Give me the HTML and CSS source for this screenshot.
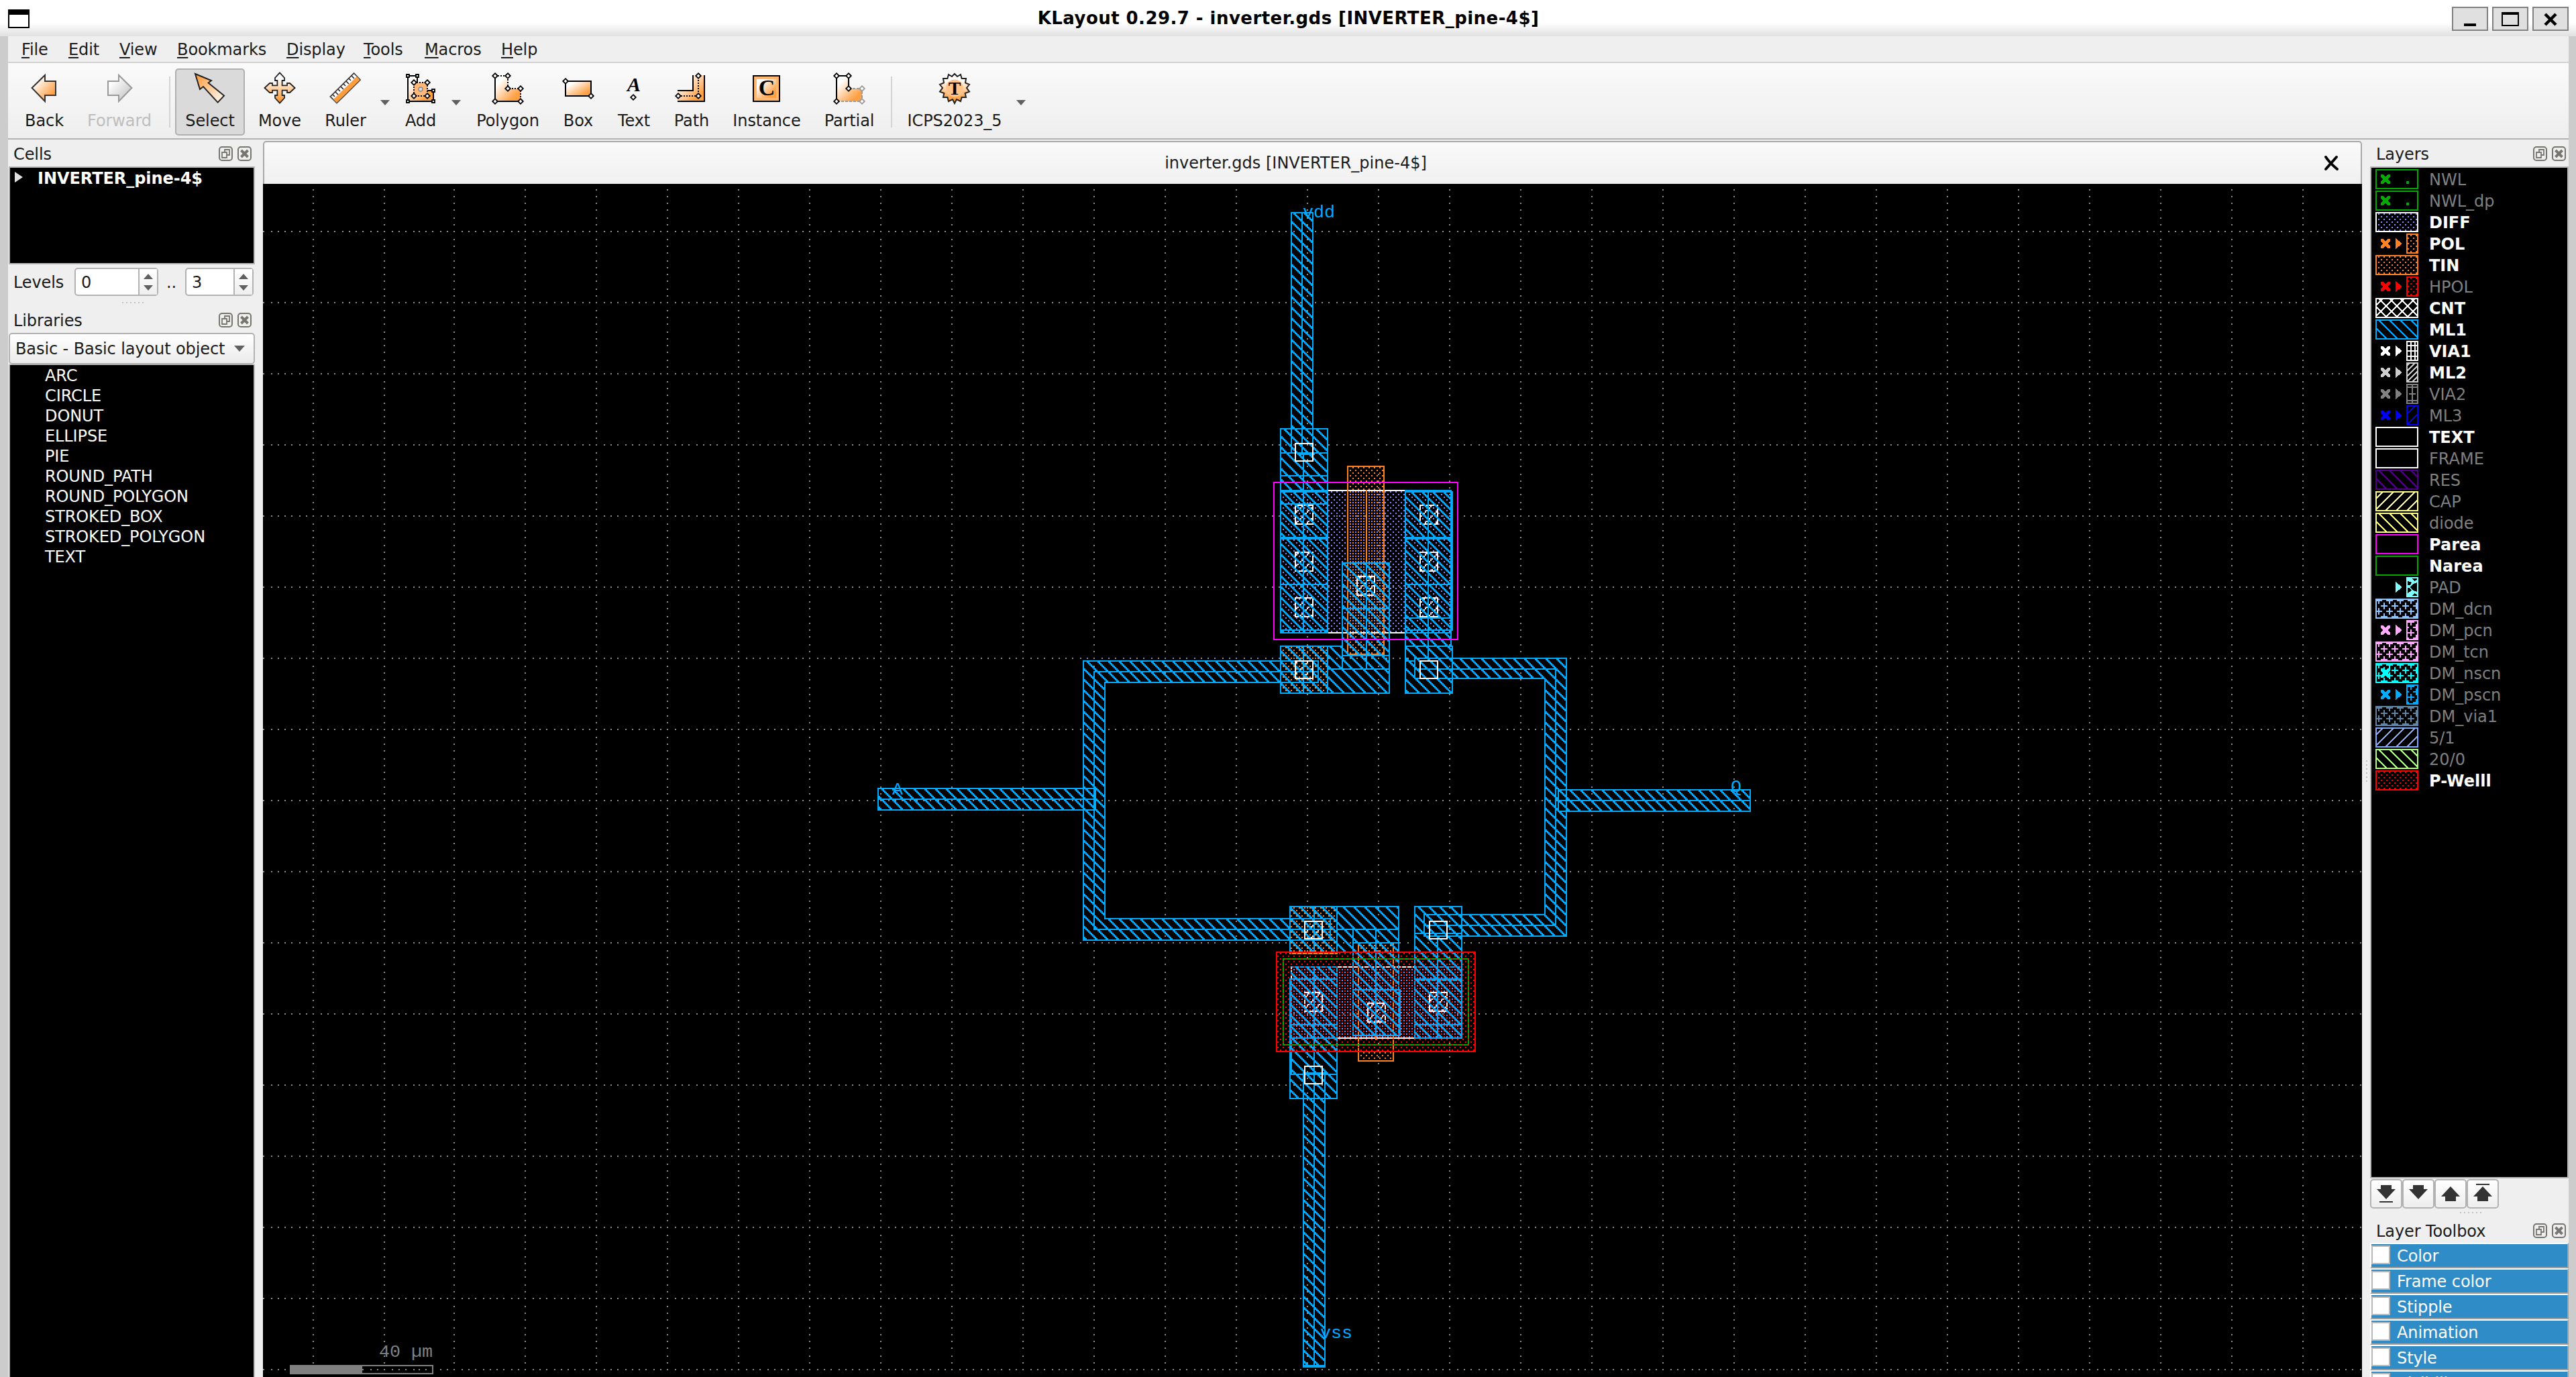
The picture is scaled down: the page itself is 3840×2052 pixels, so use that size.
FILE: index.html
```html
<!DOCTYPE html>
<html lang="en">
<head>
<meta charset="utf-8">
<title>KLayout 0.29.7 - inverter.gds [INVERTER_pine-4$]</title>
<link rel="stylesheet" href="styles.css">
</head>
<body>
<svg class="defs" width="0" height="0" aria-hidden="true">
  <defs>
    <linearGradient id="diag" x1="0" y1="0" x2="1" y2="1"><stop offset=".2" stop-color="#fff"/><stop offset=".8" stop-color="#ffa044"/></linearGradient>
    <linearGradient id="diagGray" x1="0" y1="0" x2="1" y2="1"><stop offset=".2" stop-color="#fff"/><stop offset="1" stop-color="#bbb"/></linearGradient>
    <linearGradient id="diagRev" x1="0" y1="0" x2="1" y2="1"><stop offset="0" stop-color="#ff9833"/><stop offset="1" stop-color="#fff"/></linearGradient>
    <linearGradient id="down" x1="0" y1="0" x2="0" y2="1"><stop offset=".2" stop-color="#fff"/><stop offset="1" stop-color="#ff8c1a"/></linearGradient>
    <path id="node" d="M0-1.9 1.9 0 0 1.9-1.9 0Z"/>
    <!-- layer swatch parts, 32 x 15 grid -->
    <rect id="frame" x=".5" y=".5" width="31" height="14" fill="none" stroke="currentColor"/>
    <path id="lx" d="M4 4.200h2l1.500 1.600L9 4.200h2v1.400L9.300 7.500 11 9.400v1.400H9L7.500 9.200 6 10.800H4V9.400l1.700-1.900L4 5.600Z" fill="currentColor"/>
    <path id="lt" d="M15 3.500 20 7.500 15 11.500Z" fill="currentColor"/>
    <rect id="mini" x="23.5" y=".5" width="8" height="14" fill="none" stroke="currentColor"/>
    <clipPath id="mc"><rect x="23" y="0" width="9" height="15"/></clipPath>
    <path id="dots" d="M2 1.500H31M4 3.500H31M2 5.500H31M4 7.500H31M2 9.500H31M4 11.500H31M2 13.500H31" fill="none" stroke="currentColor" stroke-dasharray="1 3"/>
    <path id="back" d="M-14 0 1 15M-6 0 9 15M2 0 17 15M10 0 25 15M18 0 33 15M26 0 41 15" fill="none" stroke="currentColor" stroke-width=".75"/>
    <path id="backThick" d="M-14 0 1 15M-6 0 9 15M2 0 17 15M10 0 25 15M18 0 33 15M26 0 41 15" fill="none" stroke="currentColor" stroke-width="1.3"/>
    <path id="slash" d="M-1 15 14 0M-9 15 6 0M7 15 22 0M15 15 30 0M23 15 38 0M31 15 46 0" fill="none" stroke="currentColor" stroke-width=".75"/>
    <path id="dense" d="M11 15 26 0M15 15 30 0M19 15 34 0M23 15 38 0M27 15 42 0M31 15 46 0" fill="none" stroke="currentColor" stroke-width=".75"/>
    <path id="plus" d="M6.500 3v5M14.500 3v5M22.500 3v5M30.500 3v5M4 5.500h5M12 5.500h5M20 5.500h5M28 5.500h4M2.500 7v5M10.500 7v5M18.500 7v5M26.500 7v5M0 9.500h5M8 9.500h5M16 9.500h5M24 9.500h5M2.500 0v4M10.500 0v4M18.500 0v4M26.500 0v4M6.500 11v4M14.500 11v4M22.500 11v4M30.500 11v4M4 13.500h5M12 13.500h5M20 13.500h5M28 13.500h4M0 1.500h5M8 1.500h5M16 1.500h5M24 1.500h5" fill="none" stroke="currentColor"/>
    <path id="grid" d="M26.500 0v15M29.500 0v15M23 3.500h9M23 7.500h9M23 11.500h9" fill="none" stroke="currentColor"/>
    <path id="bars" d="M23 2.500h9M27.500 0v15M23 12.500h9M25 7.500h5" fill="none" stroke="currentColor"/>
    <!-- stipples of the layout view -->
    <pattern id="ml1" width="8" height="8" patternUnits="userSpaceOnUse"><path d="M5 0h2v1h-2zM6 1h2v1h-2zM7 2h1v1h-1zM0 2h1v1h-1zM0 3h2v1h-2zM1 4h2v1h-2zM2 5h2v1h-2zM3 6h2v1h-2zM4 7h2v1h-2z" fill="#0af"/></pattern>
    <pattern id="pol" width="4" height="4" patternUnits="userSpaceOnUse"><path d="M0 0h1v1h-1zM2 2h1v1h-1z" fill="#ff8020"/></pattern>
    <pattern id="pwell" width="4" height="4" patternUnits="userSpaceOnUse"><path d="M0 0h1v1h-1zM2 2h1v1h-1z" fill="#f00"/></pattern>
    <pattern id="diff" width="4" height="4" patternUnits="userSpaceOnUse"><path d="M2 0h1v1h-1zM0 2h1v1h-1z" fill="#9580ff"/></pattern>
    <pattern id="cnt" width="8" height="8" patternUnits="userSpaceOnUse"><path d="M3 0h1v1h-1zM2 1h1v1h-1zM1 2h1v1h-1zM0 3h1v1h-1zM7 4h1v1h-1zM6 5h1v1h-1zM5 6h1v1h-1zM4 7h1v1h-1z" fill="#fff"/></pattern>
    <path id="cell" fill="#8c8c8c" d="M0 0h1v1h-1zM6 0h1v1h-1zM11 0h1v1h-1zM16 0h1v1h-1zM22 0h1v1h-1zM27 0h1v1h-1zM32 0h1v1h-1zM37 0h1v1h-1zM43 0h1v1h-1zM48 0h1v1h-1zM0 6h1v1h-1zM0 11h1v1h-1zM0 16h1v1h-1zM0 22h1v1h-1zM0 27h1v1h-1zM0 32h1v1h-1zM0 37h1v1h-1zM0 43h1v1h-1zM0 48h1v1h-1z"/>
    <pattern id="dotgrid" x="20" y="172" width="53" height="53" patternUnits="userSpaceOnUse"><use href="#cell"/></pattern>
    <pattern id="dotgridLeft" x="21" y="172" width="53" height="53" patternUnits="userSpaceOnUse"><use href="#cell"/></pattern>
    <g id="dockbtns" fill="none" stroke="#77756f" stroke-width="2">
      <rect x="2" y="1" width="19" height="20" rx="4"/><rect x="30" y="1" width="19" height="20" rx="4"/>
      <path d="M10 9V5h7v8h-4M6 9h7v8H6Z" stroke-width="1.800"/><path d="M34.500 6 44.500 16M44.500 6 34.500 16" stroke-width="4"/>
    </g>
  </defs>
</svg>

<header class="titlebar">
  <svg class="appicon" viewBox="0 0 32 28"><rect x="1" y="1" width="30" height="26" fill="#fff" stroke="#000" stroke-width="2"/><path d="M0 0h32v8H0Z"/></svg>
  <h1>KLayout 0.29.7 - inverter.gds [INVERTER_pine-4$]</h1>
  <div class="winbtns">
    <span><svg viewBox="0 0 54 36"><path d="M18 27h18" stroke="#000" stroke-width="4"/></svg></span>
    <span><svg viewBox="0 0 54 36"><path d="M15 9h24v19H15Z" fill="none" stroke="#000" stroke-width="2"/><path d="M14 10h26" stroke="#000" stroke-width="4"/></svg></span>
    <span><svg viewBox="0 0 54 36"><path d="M19 11 35 27M35 11 19 27" stroke="#000" stroke-width="4.500"/></svg></span>
  </div>
</header>

<div class="window">
<nav class="menubar"><span><u>F</u>ile</span><span><u>E</u>dit</span><span><u>V</u>iew</span><span><u>B</u>ookmarks</span><span><u>D</u>isplay</span><span><u>T</u>ools</span><span><u>M</u>acros</span><span><u>H</u>elp</span></nav>

<div class="toolbar">
  <div class="tool w108"><svg viewBox="0 0 24 24"><path d="M2.800 12 12.500 2.500V7H20.500V17.500H12.500V22Z" fill="url(#diag)" stroke="#333"/></svg>Back</div>
  <div class="tool w116 disabled"><svg viewBox="0 0 24 24"><path d="M21.200 12 11.500 2.500V7H3.500V17.500H11.500V22Z" fill="url(#diagGray)" stroke="#999"/></svg>Forward</div>
  <i class="sep first"></i>
  <div class="tool w104 active"><svg viewBox="0 0 24 24"><path d="M1 1.500 13 6.500 10.800 8.200 22.500 17.800 17.800 22.800 7 11 4.500 13Z" fill="url(#diagRev)" stroke="#222"/></svg>Select</div>
  <div class="tool w104"><svg viewBox="0 0 24 24"><path d="M12 .7 15.500 4.500V6.500H13.800V10.200H17.500V8.500H19.500L23.300 12 19.500 15.500H17.500V13.800H13.800V17.500H15.500V19.500L12 23.300 8.500 19.500V17.500H10.200V13.800H6.500V15.500H4.500L.7 12 4.500 8.500H6.500V10.200H10.200V6.500H8.500V4.500Z" fill="url(#down)" stroke="#222" stroke-width=".9"/></svg>Move</div>
  <div class="tool w92"><svg viewBox="0 0 24 24"><path d="M18.300 1 23 6 5.500 23.300.7 18.500Z" fill="#fff" stroke="#444" stroke-width=".9"/><path d="M20.500 3.500 22.700 6 5.400 23 3 20.500Z" fill="#ff9d3d"/><path d="M16.500 3l2 2M14.500 5l1.500 1.500M12.500 7l2 2M10.500 9l1.500 1.500M8.500 11l2 2M6.500 13l1.500 1.500M4.500 15l2 2M2.500 17l1.500 1.500" stroke="#222" stroke-width=".8"/></svg>Ruler</div>
  <i class="drop"></i>
  <div class="tool w80"><svg viewBox="0 0 24 24"><path d="M2.500 3H9.500V14H21.500V22H2.500Z" fill="url(#diag)" stroke="#000"/><rect x="7" y="8" width="10" height="10" fill="#ffb878"/><path d="M7 8h10v10H7Z" fill="none" stroke="#000" stroke-dasharray="1 1"/><circle cx="12" cy="13" r="1.500" fill="#ddd" stroke="#888" stroke-width=".7"/><g fill="#fff" stroke="#000" stroke-width=".9"><path d="M1.500 2h2v2h-2zM8.500 2h2v2h-2zM1.500 21h2v2h-2zM20.500 21h2v2h-2zM20.500 13h2v2h-2z"/><use href="#node" x="7" y="8"/><use href="#node" x="17" y="8"/><use href="#node" x="7" y="18"/><use href="#node" x="17" y="18"/></g></svg>Add</div>
  <i class="drop"></i>
  <div class="tool w128"><svg viewBox="0 0 24 24"><path d="M2.500 3H12V12.500H21.500V22H2.500Z" fill="url(#diag)"/><path d="M2.500 3H12V12.500H21.500V22" fill="none" stroke="#000" stroke-dasharray="1 1"/><path d="M2.500 3V22H21.500" fill="none" stroke="#000"/><g fill="#fff" stroke="#000" stroke-width=".9"><use href="#node" x="2.500" y="3"/><use href="#node" x="12" y="3"/><use href="#node" x="12" y="12.500"/><use href="#node" x="21.500" y="12.500"/><use href="#node" x="2.500" y="22"/><use href="#node" x="21.500" y="22"/></g></svg>Polygon</div>
  <div class="tool w82"><svg viewBox="0 0 24 24"><path d="M2.500 7H21.500V18H2.500Z" fill="url(#diag)" stroke="#000"/><g fill="#fff" stroke="#000" stroke-width=".9"><use href="#node" x="2.500" y="7"/><use href="#node" x="21.500" y="18"/></g></svg>Box</div>
  <div class="tool w84"><svg viewBox="0 0 24 24"><text x="12" y="14.500" class="ic-a">A</text><use href="#node" x="11.500" y="19" fill="#fff" stroke="#000" stroke-width=".9"/></svg>Text</div>
  <div class="tool w88"><svg viewBox="0 0 24 24"><path d="M13 2.500H21.500V22H1.500V14H13Z" fill="url(#diag)"/><path d="M13 2.500V14H1.500M1.500 22H21.500V2.500" fill="none" stroke="#000"/><path d="M2 18H17V3" fill="none" stroke="#000" stroke-dasharray="1 1"/><g fill="#fff" stroke="#000" stroke-width=".9"><use href="#node" x="2" y="18"/><use href="#node" x="17" y="18"/><use href="#node" x="17" y="3"/></g></svg>Path</div>
  <div class="tool w136"><svg viewBox="0 0 24 24"><path d="M2 3H21.500V22H2Z" fill="#ffb66e" stroke="#000"/><path d="M4.500 5.500H19V19.500H4.500Z" fill="url(#diag)"/><text x="12" y="17.700" class="ic-c">C</text></svg>Instance</div>
  <div class="tool w110"><svg viewBox="0 0 24 24"><path d="M2.500 3H11.500V12.500H21.500V22H2.500Z" fill="url(#diag)"/><path d="M11.500 12.500H21.500V22H2.500" fill="none" stroke="#999" stroke-dasharray="2 1"/><path d="M2.500 22V3H11.500V12.500" fill="none" stroke="#000"/><g fill="#fff" stroke="#000" stroke-width=".9"><use href="#node" x="2.500" y="3"/><use href="#node" x="11.500" y="3"/><use href="#node" x="11.500" y="12.500"/><use href="#node" x="2.500" y="22"/><g stroke="#999"><use href="#node" x="21.500" y="12.500"/><use href="#node" x="21.500" y="22"/></g></g></svg>Partial</div>
  <i class="sep"></i>
  <div class="tool w172"><svg viewBox="0 0 24 24"><path d="M12 23.500 10.500 20.500 7.500 22 6.700 19 3.500 19 4.200 16 1 14.800 3 12 1 9.500 4 8.200 3.500 5 6.700 5 7.500 2 10 3.500 12 1.500 14 3.500 16.500 2 17.300 5 20.500 5 20 8.200 23 9.500 21 12 23 14.800 19.800 16 20.500 19 17.300 19 16.500 22 13.500 20.500Z" fill="url(#down)" stroke="#222"/><circle cx="12" cy="12.200" r="6.500" fill="#ffc48a"/><text x="12" y="16.800" class="ic-t">T</text></svg>ICPS2023_5</div>
  <i class="drop"></i>
</div>

<main class="body">
  <aside class="dock left">
    <div class="docktitle">Cells<svg viewBox="0 0 50 22"><use href="#dockbtns"/></svg></div>
    <div class="cells"><i class="tri"></i><b>INVERTER_pine-4$</b></div>
    <div class="levels"><span class="lbl">Levels</span><span class="spin s1"><span>0</span><i></i></span><span class="dd">..</span><span class="spin s2"><span>3</span><i></i></span></div>
    <div class="grip"></div>
    <div class="docktitle lib">Libraries<svg viewBox="0 0 50 22"><use href="#dockbtns"/></svg></div>
    <div class="combo">Basic - Basic layout object<i></i></div>
    <ul class="liblist"><li>ARC</li><li>CIRCLE</li><li>DONUT</li><li>ELLIPSE</li><li>PIE</li><li>ROUND_PATH</li><li>ROUND_POLYGON</li><li>STROKED_BOX</li><li>STROKED_POLYGON</li><li>TEXT</li></ul>
  </aside>

  <section class="view">
    <div class="tab"><span>inverter.gds [INVERTER_pine-4$]</span><svg viewBox="0 0 24 24"><path d="M4 3C8 9 15 16 21 21M20 3 4 21" fill="none" stroke="#000" stroke-width="4" stroke-linecap="round"/></svg></div>
    <svg class="layout" viewBox="196 137 1564.5 889" shape-rendering="crispEdges">
      <rect x="196" y="137" width="1565" height="889" fill="#000"/>
      <rect x="196" y="137" width="114" height="889" fill="url(#dotgridLeft)"/>
      <rect x="310" y="137" width="1451" height="889" fill="url(#dotgrid)"/>

      <!-- diffusion -->
      <g fill="url(#diff)" stroke="#fff"><rect x="954.5" y="365.500" width="127" height="106"/><rect x="962.500" y="720.500" width="127" height="53"/></g>
      <!-- poly -->
      <g fill="url(#pol)" stroke="#ff8020"><rect x="1004.500" y="347.500" width="27" height="140"/><rect x="1012.500" y="702.500" width="26" height="88"/><path d="M1018.500 365v55M1025.500 771v4"/>
        <rect x="954.500" y="481.500" width="35" height="35"/><rect x="961.500" y="675.500" width="35" height="35"/></g>
      <!-- contacts -->
      <g fill="url(#cnt)" stroke="#fff">
        <path d="M965.500 376.500h13v14h-13zM965.500 411.500h13v14h-13zM965.500 445.500h13v14h-13zM1058.500 376.500h13v14h-13zM1058.500 411.500h13v14h-13zM1058.500 445.500h13v14h-13zM1011.500 429.500h13v14h-13zM965.500 492.500h13v13h-13z"/>
        <path d="M972.500 739.500h13v14h-13zM1065.500 739.500h13v14h-13zM1019.500 747.500h13v14h-13zM972.500 686.500h13v13h-13z"/>
      </g>
      <!-- metal 1 -->
      <g fill="url(#ml1)" stroke="#0af">
        <rect x="954.500" y="319.500" width="35" height="152"/>
        <path d="M962.500 319.500V158.500H978.500V319.500"/>
        <path d="M1047.500 365.500H1081.500V481.500H1082.500V516.500H1047.500Z"/>
        <path d="M954.500 481.500H1000.500V419.500H1035.500V516.500H954.500Z"/>
        <path d="M961.500 675.500H1042.500V737.500H1042.500V771.500H1008.500V709.500H961.500Z"/>
        <rect x="1054.500" y="675.500" width="35" height="98"/>
        <path d="M962.500 720.500H996.500V818.500H961.500V729.500"/>
        <path d="M971.500 818.500V1018.500H987.500V818.500"/>
        <path d="M954.500 508.500H823.500V684.500H961.500M954.500 492.500H807.500V700.500H961.500" fill="none"/>
        <path d="M807 492H955V508H823V684H962V700H807Z" stroke="none"/>
        <path d="M1083 490.500H1167.500V697.500H1090M1083 505.500H1151.500V681.500H1090" fill="none"/>
        <path d="M1083 490H1167V697H1090V681H1151V506H1083Z" stroke="none"/>
        <rect x="654.500" y="587.500" width="162" height="16"/>
        <rect x="1161.500" y="588.500" width="143" height="16"/>
      </g>
      <!-- metal 1 inner edges and path spines -->
      <g fill="none" stroke="#0af">
        <path d="M970.500 158V338M962.500 319v19M978.500 319v19M971.500 337V471M954 337.500h36M968 338.500h12M954 354.500h36M954 365.500h36M954 366.500h36M954 375.500h36M954 400.500h36M954 401.500h36M954 435.500h36M954 469.500h36"/>
        <path d="M1064.500 366V490M1082.500 366V470M1047 366.500h36M1047 400.500h36M1047 401.500h36M1047 435.500h36M1047 460.500h36M1047 469.500h36M1047 471.500h35M1047 481.500h36M1047 492.500h8M1159.500 498V690M1054 498.500H1160M1054.500 490V506M1054 490.500h30M1054 505.500h30M1061 689.500H1160"/>
        <path d="M1000 453.500h36M1000 488.500h36M1018.500 419V499M1000.500 481V499M989 498.500h47M989.500 481V517M971.500 481V517M815 500.500H983M815.500 500V693M982.500 492V509M954 492.500h29M954 508.500h29M815 692.500H992"/>
        <path d="M979.500 675V710M996.500 675V710M991.500 684V701M961 684.500h31M961 700.500h31M996 692.500h47M1008.500 692V738M1025.500 692V772M1008 702.500h35M1008 737.500h36M1043.500 737V772M1008 771.500h36M996 709.500h13"/>
        <path d="M1071.500 698V774M1061.500 681V698M1061 681.500h29M1061 697.500h29M1054 695.500h36M1054 720.500h36M1054 729.500h36M1054 730.500h36M1054 763.500h36"/>
        <path d="M979.500 720V1018M961 729.500h36M961 763.500h36M962 773.500h35M962 800.500h35M971 799.500h17M962.500 729V800M961.500 729V764M971.500 800V818M987.500 800V818"/>
        <path d="M654 595.500H817M815.500 587v17M807.500 587v17M1161 596.500H1305M971 1017.500h17"/>
      </g>
      <!-- p-well and implant frames -->
      <rect x="951.500" y="709.500" width="148" height="74" fill="none" stroke="#f00"/>
      <rect x="956.500" y="714.500" width="138" height="64" fill="none" stroke="#0a0"/>
      <rect x="951" y="709" width="149" height="75" fill="url(#pwell)"/>
      <rect x="949.500" y="359.500" width="137" height="117" fill="none" stroke="#f0f"/>
      <!-- vias -->
      <path d="M965.500 330.500h13v13h-13zM965.500 492.500h13v13h-13zM1058.500 492.500h13v13h-13zM972.500 686.500h13v13h-13zM1065.500 686.500h13v13h-13zM972.500 794.500h13v13h-13z" fill="none" stroke="#fff"/>
      <!-- labels and scale bar -->
      <g class="labels"><text x="971" y="162">vdd</text><text x="665" y="592">A</text><text x="1290" y="590">Q</text><text x="984" y="997" class="vss">vss</text></g>
      <text x="282.500" y="1011" class="scale">40 µm</text>
      <rect x="216.500" y="1017.500" width="106" height="6" fill="none" stroke="#808080"/><rect x="216" y="1017" width="54" height="7" fill="#808080"/>
    </svg>
  </section>

  <div class="vgrip"></div>

  <aside class="dock right">
    <div class="docktitle r">Layers<svg viewBox="0 0 50 22"><use href="#dockbtns"/></svg></div>
    <ul class="layers">
      <li><svg viewBox="0 0 32 15" color="#00aa00"><use href="#frame"/><use href="#lx"/><path d="M23 9h2v2h-2z" fill="currentColor"/></svg>NWL</li>
      <li><svg viewBox="0 0 32 15" color="#00aa00"><use href="#frame"/><use href="#lx"/><path d="M23 9h2v2h-2z" fill="currentColor"/></svg>NWL_dp</li>
      <li class="on"><svg viewBox="0 0 32 15" color="#9580ff"><use href="#dots"/><use href="#frame" color="#fff"/></svg>DIFF</li>
      <li class="on"><svg viewBox="0 0 32 15" color="#ff8020"><use href="#lx"/><use href="#lt"/><use href="#mini"/><g clip-path="url(#mc)"><use href="#dots"/></g></svg>POL</li>
      <li class="on"><svg viewBox="0 0 32 15" color="#ff8020"><use href="#frame"/><use href="#dots"/></svg>TIN</li>
      <li><svg viewBox="0 0 32 15" color="#ff0000"><use href="#lx"/><use href="#lt"/><use href="#mini"/><g clip-path="url(#mc)"><use href="#dots"/></g></svg>HPOL</li>
      <li class="on"><svg viewBox="0 0 32 15" color="#ffffff"><use href="#frame"/><use href="#back"/><use href="#slash"/></svg>CNT</li>
      <li class="on"><svg viewBox="0 0 32 15" color="#00aaff"><use href="#frame"/><use href="#backThick"/></svg>ML1</li>
      <li class="on"><svg viewBox="0 0 32 15" color="#ffffff"><use href="#lx"/><use href="#lt"/><use href="#mini"/><use href="#grid"/></svg>VIA1</li>
      <li class="on"><svg viewBox="0 0 32 15" color="#cccccc"><use href="#lx"/><use href="#lt"/><use href="#mini"/><g clip-path="url(#mc)"><use href="#dense"/></g></svg>ML2</li>
      <li><svg viewBox="0 0 32 15" color="#808080"><use href="#lx"/><use href="#lt"/><use href="#mini"/><use href="#bars"/></svg>VIA2</li>
      <li><svg viewBox="0 0 32 15" color="#0000ff"><use href="#lx"/><use href="#lt"/><use href="#mini"/><g clip-path="url(#mc)"><use href="#slash"/></g></svg>ML3</li>
      <li class="on"><svg viewBox="0 0 32 15" color="#ffffff"><use href="#frame"/></svg>TEXT</li>
      <li><svg viewBox="0 0 32 15" color="#ffffff"><use href="#frame"/></svg>FRAME</li>
      <li><svg viewBox="0 0 32 15" color="#500085"><use href="#frame"/><use href="#back"/></svg>RES</li>
      <li><svg viewBox="0 0 32 15" color="#ffff80"><use href="#frame"/><use href="#slash"/></svg>CAP</li>
      <li><svg viewBox="0 0 32 15" color="#ffff80"><use href="#frame"/><use href="#back"/></svg>diode</li>
      <li class="on"><svg viewBox="0 0 32 15" color="#ff00ff"><use href="#frame"/></svg>Parea</li>
      <li class="on"><svg viewBox="0 0 32 15" color="#00aa00"><use href="#frame"/></svg>Narea</li>
      <li><svg viewBox="0 0 32 15" color="#80ffff"><use href="#lt"/><use href="#mini"/><path d="M24 1h3l2 2 2-1v2l-3 1-2 2v1l2 2 3 1v2l-2-1-2 2h-3v-2l3-2-2-2H24V6h2l1-2-3-1z" fill="currentColor"/></svg>PAD</li>
      <li><svg viewBox="0 0 32 15" color="#8fc4ff"><use href="#frame"/><use href="#plus"/></svg>DM_dcn</li>
      <li><svg viewBox="0 0 32 15" color="#ffa8ff"><use href="#lx"/><use href="#lt"/><use href="#mini"/><g clip-path="url(#mc)"><use href="#plus"/></g></svg>DM_pcn</li>
      <li><svg viewBox="0 0 32 15" color="#ffa8ff"><use href="#frame"/><use href="#plus"/></svg>DM_tcn</li>
      <li><svg viewBox="0 0 32 15" color="#00ffff"><use href="#frame"/><use href="#plus"/><use href="#lx"/></svg>DM_nscn</li>
      <li><svg viewBox="0 0 32 15" color="#00aaff"><use href="#lx"/><use href="#lt"/><use href="#mini"/><g clip-path="url(#mc)"><use href="#plus"/></g></svg>DM_pscn</li>
      <li><svg viewBox="0 0 32 15" color="#6085a5"><use href="#frame"/><use href="#plus"/></svg>DM_via1</li>
      <li><svg viewBox="0 0 32 15" color="#80a8ff"><use href="#frame"/><use href="#slash"/></svg>5/1</li>
      <li><svg viewBox="0 0 32 15" color="#b0ff80"><use href="#frame"/><use href="#back"/></svg>20/0</li>
      <li class="on"><svg viewBox="0 0 32 15" color="#ff0000"><use href="#frame"/><use href="#dots"/></svg>P-Welll</li>
    </ul>
    <div class="movebtns">
      <span><svg viewBox="0 0 48 44"><path d="M16 9h16v6h6L24 30 10 15h6zM14 33h20v2H14z"/></svg></span>
      <span><svg viewBox="0 0 48 44"><path d="M16 9h16v6h6L24 30 10 15h6z"/></svg></span>
      <span><svg viewBox="0 0 48 44"><path d="M24 11 38 26h-6v7H16v-7h-6z"/></svg></span>
      <span><svg viewBox="0 0 48 44"><path d="M24 11 38 26h-6v7H16v-7h-6zM14 7h20v2H14z"/></svg></span>
    </div>
    <div class="grip rg"></div>
    <div class="docktitle r tb">Layer Toolbox<svg viewBox="0 0 50 22"><use href="#dockbtns"/></svg></div>
    <ul class="toolbox"><li><i></i>Color</li><li><i></i>Frame color</li><li><i></i>Stipple</li><li><i></i>Animation</li><li><i></i>Style</li><li><i></i>Visibility</li></ul>
  </aside>
</main>
</div>
</body>
</html>
```

FILE: styles.css
```css
* { box-sizing: border-box; }
html, body { margin: 0; height: 2052px; overflow: hidden; }
body {
  width: 3840px;
  background: #efefef;
  font: 24px/30px "DejaVu Sans", sans-serif;
  letter-spacing: -0.1px;
  color: #1a1a1a;
  display: flex;
  flex-direction: column;
}
ul { list-style: none; margin: 0; padding: 0; }
.defs { position: absolute; }

.titlebar {
  height: 54px;
  flex: none;
  display: flex;
  align-items: flex-start;
  padding: 0 11px 0 12px;
  background: linear-gradient(#fff 0, #fff 34px, #e0e0e0 54px);
}
.appicon { width: 32px; height: 28px; margin-top: 14px; }
.titlebar h1 {
  flex: 1;
  margin: 0;
  padding-left: 142px;
  text-align: center;
  font-size: 26px;
  line-height: 54px;
  letter-spacing: 0.45px;
  color: #000;
}
.winbtns { display: flex; gap: 6px; margin-top: 10px; }
.winbtns span { width: 54px; height: 36px; border: 2px solid #808080; background: #e0e0e0; }
.winbtns svg { display: block; width: 54px; height: 36px; margin: -2px; }

.window {
  flex: none;
  height: 1998px;
  border-left: 12px solid #ccc;
  border-right: 11px solid #ccc;
  overflow: hidden;
}
.menubar {
  height: 40px;
  display: grid;
  grid-template-columns: 70px 76px 86px 163px 115px 91px 114px 80px;
  padding-left: 20px;
  line-height: 40px;
  border-bottom: 2px solid #d2d2d2;
}
.menubar u { text-decoration-thickness: 2px; text-underline-offset: 3px; }

.toolbar {
  height: 114px;
  display: flex;
  border-bottom: 2px solid #b2b2b2;
  background: linear-gradient(#fafafa, #eee);
  padding-top: 8px;
}
.tool {
  height: 100px;
  display: flex;
  flex-direction: column;
  align-items: center;
  padding-top: 3px;
  border: 2px solid transparent;
  white-space: nowrap;
  line-height: 30px;
}
.tool svg { width: 48px; height: 48px; flex: none; margin-bottom: 10px; overflow: visible; }
.tool.active { background: #dadada; border-color: #b0b0b0; border-radius: 5px; }
.tool.disabled { color: #bebebe; }
.w80 { width: 80px; } .w82 { width: 82px; } .w84 { width: 84px; } .w88 { width: 88px; }
.w92 { width: 92px; } .w104 { width: 104px; } .w108 { width: 108px; } .w110 { width: 110px; }
.w116 { width: 116px; } .w128 { width: 128px; } .w136 { width: 136px; } .w172 { width: 172px; }
.sep { width: 2px; height: 76px; background: #d4d4d4; margin: 12px 7px 0; }
.sep.first { margin: 12px 7px 0 16px; }
.drop { width: 26px; padding: 47px 0 0 6px; }
.drop::after { content: ""; display: block; border: 7px solid transparent; border-top: 8px solid #606060; border-bottom: 0; width: 0; }
.ic-a, .ic-c, .ic-t { font-family: "Liberation Serif", serif; text-anchor: middle; letter-spacing: 0; }
.ic-a { font-size: 15px; font-style: italic; font-weight: bold; }
.ic-c { font-size: 17px; font-weight: bold; }
.ic-t { font-size: 14px; font-weight: bold; }

.body { display: flex; height: 1844px; }
.dock { display: flex; flex-direction: column; flex: none; }
.left { width: 368px; }
.right { width: 296px; }
.docktitle {
  height: 40px;
  flex: none;
  padding: 7px 5px 0 8px;
  display: flex;
  justify-content: space-between;
}
.docktitle svg { width: 50px; height: 22px; margin-top: 3px; }
.docktitle.r { padding: 7px 4px 0 9px; }
.cells {
  height: 146px;
  flex: none;
  margin: 0 0 0 1px;
  border: 2px solid #b8b8b8;
  background: #000;
  color: #fff;
  display: flex;
  padding: 0 0 0 7px;
  line-height: 32px;
  letter-spacing: -0.05px;
}
.tri { width: 0; height: 0; border: 8px solid transparent; border-left: 12px solid #e0e0e0; border-right: 0; margin: 6px 22px 0 0; }
.levels { height: 54px; flex: none; display: flex; align-items: flex-start; padding: 5px 0 0 8px; line-height: 45px; }
.lbl { width: 91px; }
.spin { height: 42px; border: 2px solid #b2b2b2; border-radius: 5px; background: #fff; display: flex; justify-content: space-between; line-height: 41px; padding-left: 8px; }
.s1 { width: 125px; }
.s2 { width: 102px; }
.dd { width: 40px; padding-left: 12px; }
.spin i { width: 28px; border-left: 2px solid #b2b2b2; background: linear-gradient(#fff, #eee); display: flex; flex-direction: column; align-items: center; gap: 9px; padding-top: 7px; }
.spin i::before { content: ""; border: 7px solid transparent; border-bottom: 8px solid #606060; border-top: 0; }
.spin i::after { content: ""; border: 7px solid transparent; border-top: 8px solid #606060; border-bottom: 0; }
.grip { height: 8px; flex: none; width: 32px; margin-left: 170px; background: repeating-linear-gradient(90deg, #c0c0c0 0 2px, transparent 2px 6px) 0 2px / 32px 2px no-repeat; }
.combo {
  height: 47px;
  flex: none;
  margin-left: 1px;
  border: 2px solid #b2b2b2;
  border-radius: 5px;
  background: linear-gradient(#fff, #ebebeb);
  line-height: 44px;
  padding: 0 13px 0 8px;
  display: flex;
  justify-content: space-between;
  align-items: center;
}
.combo i { width: 0; border: 8px solid transparent; border-top: 9px solid #606060; border-bottom: 0; }
.liblist { flex: 1; margin-left: 1px; border: 2px solid #b8b8b8; border-top-width: 1px; border-bottom: 0; background: #000; color: #fff; padding: 1px 0 0 52px; }
.liblist li { height: 30px; }

.view { width: 3129px; flex: none; margin-left: 12px; display: flex; flex-direction: column; }
.tab {
  height: 64px;
  margin-top: 2px;
  flex: none;
  border: 2px solid #a8a8a8;
  border-bottom: 0;
  border-radius: 5px 5px 0 0;
  background: linear-gradient(#fafafa, #f0f0f0);
  display: flex;
  align-items: center;
  padding-right: 32px;
  line-height: 63px;
}
.tab span { flex: 1; text-align: center; padding-left: 6px; letter-spacing: 0; }
.tab svg { width: 24px; height: 24px; }
.layout { display: block; width: 3129px; height: 1778px; flex: none; }
.labels text, .scale { font-family: "Liberation Mono", monospace; font-size: 13.33px; letter-spacing: 0; white-space: pre; }
.labels text { fill: #0af; }
.scale { fill: #808080; }

.vgrip { width: 12px; flex: none; padding: 925px 0 0 6px; }
.vgrip::after { content: ""; display: block; width: 2px; height: 32px; background: repeating-linear-gradient(#c0c0c0 0 2px, transparent 2px 6px); }

.layers { height: 1508px; flex: none; border: 2px solid #b8b8b8; background: #000; color: #808080; padding: 1px 0 0 6px; letter-spacing: 0; }
.layers li { height: 32px; line-height: 34px; display: flex; align-items: flex-start; }
.layers svg { width: 64px; height: 30px; margin: 1px 16px 0 0; shape-rendering: crispEdges; }
.layers .on { color: #fff; font-weight: bold; }
.movebtns { display: flex; height: 46px; flex: none; padding-top: 1px; }
.movebtns span { width: 48px; height: 44px; border: 2px solid #b2b2b2; border-radius: 5px; background: linear-gradient(#fff, #eee); }
.movebtns svg { display: block; width: 48px; height: 44px; margin: -2px; fill: #333; }
.rg { margin-left: 134px; margin-top: 2px; }
.docktitle.tb { height: 40px; padding-top: 8px; }
.toolbox li { height: 38px; border: 2px solid; border-color: #fff #a0a0a0 #a0a0a0 #fff; background: #308cc6; color: #fff; display: flex; line-height: 37px; }
.toolbox i { width: 28px; height: 28px; margin: 2px 10px 0 0; border: 2px solid #b8b8b8; background: #fff; }
```
